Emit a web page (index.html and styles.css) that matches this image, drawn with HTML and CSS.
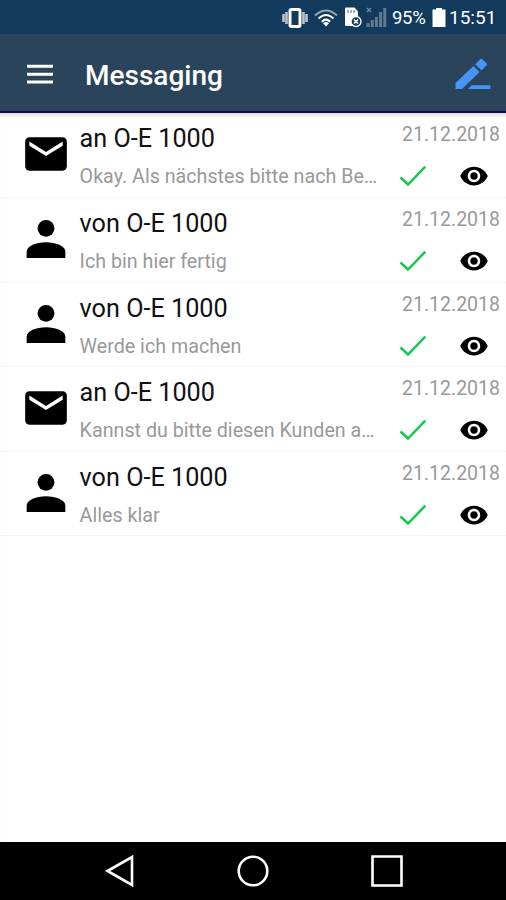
FILE: index.html
```html
<!DOCTYPE html>
<html lang="de">
<head>
    <meta charset="UTF-8">
    <meta name="viewport" content="width=device-width, initial-scale=1.0">
    <title>Messaging</title>
    <link rel="stylesheet" href="styles.css">
</head>
<body>
    <!-- icons used more than once -->
    <svg class="defs">
        <symbol id="mail" viewBox="0 0 24 24">
            <path d="M20 4H4c-1.100 0-1.990.9-1.990 2L2 18c0 1.100.9 2 2 2h16c1.100 0 2-.9 2-2V6c0-1.100-.9-2-2-2zm0 4l-8 5-8-5V6l8 5 8-5v2z"/>
        </symbol>
        <symbol id="person" viewBox="0 0 24 24">
            <circle cx="12" cy="7.600" r="3.500"/>
            <path d="M4 19.900v-2.700c0-2.400 4-3.900 8-3.900s8 1.500 8 3.900v2.700z"/>
        </symbol>
        <symbol id="check" viewBox="0 0 28 22">
            <path d="M1.500 12.500L9 19.500L26.300 1.700" fill="none" stroke="#14c850" stroke-width="2.500"/>
        </symbol>
        <symbol id="eye" viewBox="0 0 24 24">
            <path d="M12 4.500C7 4.500 2.730 7.610 1 12c1.730 4.390 6 7.500 11 7.500s9.270-3.110 11-7.500c-1.730-4.390-6-7.500-11-7.500zM12 17c-2.760 0-5-2.240-5-5s2.240-5 5-5 5 2.240 5 5-2.240 5-5 5zm0-8c-1.660 0-3 1.340-3 3s1.340 3 3 3 3-1.340 3-3-1.340-3-3-3z"/>
        </symbol>
    </svg>

    <div id="wrap">
        <div id="status">
            <svg class="vibrate" width="26" height="20" viewBox="0 0 26 20">
                <path d="M1.500 6v8M4.500 4v12M21.500 4v12M24.500 6v8" stroke="#b9c5cf" stroke-width="2.600"/>
                <rect x="8" y="1.500" width="10" height="17" rx="1.500" fill="none" stroke="#fff" stroke-width="3"/>
            </svg>
            <svg class="wifi" width="24" height="18" viewBox="0 0 24 18">
                <g fill="none" stroke="#fff" stroke-width="2">
                    <path d="M1 6.500Q12-3.500 23 6.500" stroke="#8fa3b4"/>
                    <path d="M4.500 9.500Q12 2.500 19.500 9.500"/>
                    <path d="M7.800 12.700Q12 8.500 16.200 12.700"/>
                </g>
                <path d="M9 14.300Q12 11.800 15 14.300L12 17.500z" fill="#fff"/>
            </svg>
            <svg class="sim" width="18" height="21" viewBox="0 0 18 21">
                <path d="M1 1.500Q1 .5 2 .5h8.500L14 4.500V19H2Q1 19 1 18z" fill="#fff"/>
                <path d="M4 3v3M7 3v3M10 3v3" stroke="#667f95" stroke-width="1.200"/>
                <circle cx="12" cy="14.500" r="5" fill="#113a5c" stroke="#fff" stroke-width="1.300"/>
                <path d="M10 12.500l4 4M14 12.500l-4 4" stroke="#fff" stroke-width="1.500"/>
            </svg>
            <svg class="signal" width="21" height="21" viewBox="0 0 21 21">
                <path d="M1 1l4 4M5 1L1 5" stroke="#75899b" stroke-width="1.300"/>
                <path d="M2 20v-4M6.200 20v-7M10.400 20V10M14.600 20V5M18.800 20V1" stroke="#607a90" stroke-width="3"/>
            </svg>
            <span class="percent">95%</span>
            <svg class="battery" width="14" height="19" viewBox="0 0 14 19">
                <path d="M4 0h6v1.500h3.500V19H.5V1.500H4z" fill="#fff"/>
            </svg>
            <span class="time">15:51</span>
        </div>

        <div id="title">
            <svg class="menu" width="26" height="20" viewBox="0 0 26 20">
                <path d="M0 2.300h26M0 10.300h26M0 18h26" stroke="#fff" stroke-width="3"/>
            </svg>
            <h2>Messaging</h2>
            <svg class="edit" width="36" height="32" viewBox="0 0 36 32" fill="#4596fa">
                <path d="M.5 31v-6L18.500 8l6 6L7 31z"/>
                <path d="M20.300 6.200L25.200 1.300Q26.300.2 27.400 1.300L31.400 5.300Q32.500 6.400 31.400 7.500L26.500 12.400z"/>
                <path d="M13 31l3.500-3.700H35.300V31z"/>
            </svg>
        </div>

        <div id="list">
            <div class="row">
                <div class="avatar"><svg class="mail"><use href="#mail"/></svg></div>
                <div class="line">
                    <h3>an O-E 1000</h3>
                    <span class="date">21.12.2018</span>
                </div>
                <div class="line">
                    <p>Okay. Als nächstes bitte nach Be…</p>
                    <svg class="check"><use href="#check"/></svg>
                    <svg class="eye"><use href="#eye"/></svg>
                </div>
            </div>
            <div class="row">
                <div class="avatar"><svg class="person"><use href="#person"/></svg></div>
                <div class="line">
                    <h3>von O-E 1000</h3>
                    <span class="date">21.12.2018</span>
                </div>
                <div class="line">
                    <p>Ich bin hier fertig</p>
                    <svg class="check"><use href="#check"/></svg>
                    <svg class="eye"><use href="#eye"/></svg>
                </div>
            </div>
            <div class="row">
                <div class="avatar"><svg class="person"><use href="#person"/></svg></div>
                <div class="line">
                    <h3>von O-E 1000</h3>
                    <span class="date">21.12.2018</span>
                </div>
                <div class="line">
                    <p>Werde ich machen</p>
                    <svg class="check"><use href="#check"/></svg>
                    <svg class="eye"><use href="#eye"/></svg>
                </div>
            </div>
            <div class="row">
                <div class="avatar"><svg class="mail"><use href="#mail"/></svg></div>
                <div class="line">
                    <h3>an O-E 1000</h3>
                    <span class="date">21.12.2018</span>
                </div>
                <div class="line">
                    <p>Kannst du bitte diesen Kunden a…</p>
                    <svg class="check"><use href="#check"/></svg>
                    <svg class="eye"><use href="#eye"/></svg>
                </div>
            </div>
            <div class="row">
                <div class="avatar"><svg class="person"><use href="#person"/></svg></div>
                <div class="line">
                    <h3>von O-E 1000</h3>
                    <span class="date">21.12.2018</span>
                </div>
                <div class="line">
                    <p>Alles klar</p>
                    <svg class="check"><use href="#check"/></svg>
                    <svg class="eye"><use href="#eye"/></svg>
                </div>
            </div>
        </div>

        <div id="nav">
            <svg width="32" height="32" viewBox="0 0 32 32"><path d="M4.500 16L29 2v28z"/></svg>
            <svg width="32" height="32" viewBox="0 0 32 32"><circle cx="16" cy="16" r="14.300"/></svg>
            <svg width="32" height="32" viewBox="0 0 32 32"><path d="M1.500 1.500h29v29h-29z"/></svg>
        </div>
    </div>
</body>
</html>
```

FILE: styles.css
```css
* { margin: 0; padding: 0; box-sizing: border-box; }

body {
    font-family: Roboto, "Liberation Sans", sans-serif;
    background: #fff;
}

svg { display: block; flex-shrink: 0; }

.defs { width: 0; height: 0; }

#wrap {
    width: 100%;
    height: 100vh;
    display: flex;
    flex-direction: column;
    overflow: hidden;
}

/* status bar */
#status {
    height: 34px;
    flex-shrink: 0;
    display: flex;
    align-items: center;
    justify-content: flex-end;
    padding: 1px 9px 0 0;
    background-color: #113a5c;
    color: #fff;
}

.wifi { margin-left: 6px; }
.sim { margin-left: 6px; }
.signal { margin-left: 4px; }

.percent {
    width: 34px;
    margin-left: 5px;
    font-size: 18.500px;
    letter-spacing: -0.3px;
}

.battery { margin-left: 6px; }

.time {
    width: 48px;
    margin-left: 3px;
    font-size: 19px;
}

/* toolbar */
#title {
    height: 79px;
    flex-shrink: 0;
    display: flex;
    align-items: center;
    padding: 2px 15px 0 27px;
    background-color: #2a455b;
    border-bottom: 2px solid #0b0b4e;
    color: #fff;
}

#title h2 {
    flex: 1;
    margin-left: 32px;
    padding-top: 3px;
    font-size: 28px;
    font-weight: 500;
}

/* messages */
#list {
    flex: 1;
    padding-top: 0.4px;
    box-shadow: inset 0 5px 4px -3px #d5d5dd;
}

.row {
    height: 84.6px;
    display: grid;
    grid-template-columns: 79.600px 1fr;
    grid-template-rows: 46px 34px;
    border-bottom: 1px solid #f4f4f4;
}

.avatar {
    grid-row: 1 / 3;
    display: flex;
    align-items: center;
    justify-content: center;
    padding: 2px 0 0 12px;
}

.mail { width: 50px; height: 50px; }
.person { width: 58px; height: 58px; }

.line {
    min-width: 0;
    display: flex;
    align-items: center;
    padding-right: 6px;
}

.line h3 {
    flex: 1;
    padding-top: 5px;
    font-size: 25.200px;
    font-weight: 400;
    color: #111;
}

.date {
    padding-bottom: 3px;
    font-size: 19.500px;
    color: #999;
}

.line p {
    width: 300px;
    padding-top: 1px;
    white-space: nowrap;
    font-size: 19.700px;
    color: #999;
}

.check {
    width: 28px;
    height: 22px;
    margin-left: 19px;
}

.eye {
    width: 30px;
    height: 30px;
    margin-left: 32px;
}

/* bottom navigation */
#nav {
    height: 58px;
    flex-shrink: 0;
    display: flex;
    align-items: center;
    justify-content: center;
    gap: 102px;
    background-color: #000;
}

#nav svg {
    fill: none;
    stroke: #fff;
    stroke-width: 2.6;
}
```
